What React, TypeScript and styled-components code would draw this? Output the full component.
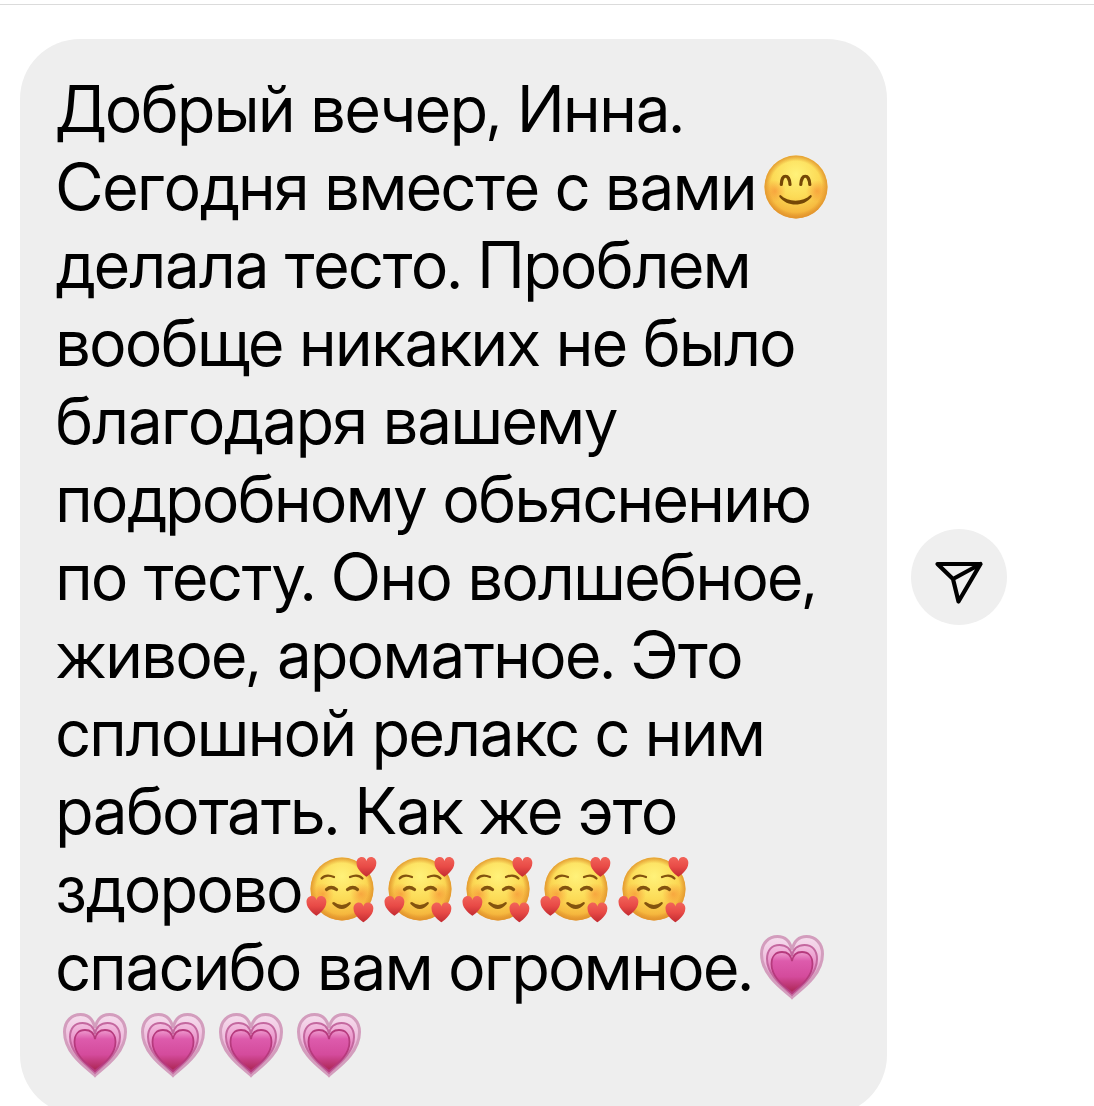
import React from "react";
import styled, { createGlobalStyle } from "styled-components";

const GlobalStyle = createGlobalStyle`
  body {
    margin: 0;
    background: #fff;
  }
`;

const Thread = styled.main`
  box-sizing: border-box;
  height: 100vh;
  padding-top: 4px;
  overflow: hidden;
  font-family: "Inter Display", Inter, "Liberation Sans", sans-serif;
`;

const Conversation = styled.section`
  border-top: 1px solid #dbdbdb;
  padding: 34px 87px 0 20px;
`;

const MessageRow = styled.article`
  display: flex;
  align-items: center;
  gap: 24px;
`;

const Bubble = styled.p`
  box-sizing: border-box;
  flex: 1;
  min-width: 0;
  margin: 0;
  padding: 31px 36px;
  border-radius: 60px;
  background: #eee;
  color: #000;
  font-size: 65px;
  line-height: 78px;
`;

const Line = styled.span`
  display: block;
  white-space: nowrap;
`;

const Emoji = styled.svg`
  width: 64px;
  height: 64px;
  margin: 0 7px;
  vertical-align: -9px;
  overflow: visible;
`;

const ShareButton = styled.button`
  flex: none;
  width: 96px;
  height: 96px;
  padding: 0;
  border: 0;
  border-radius: 50%;
  background: #efefef;
  color: #000;
  cursor: pointer;
`;

const ShareIcon = styled.svg`
  display: block;
  width: 96px;
  height: 96px;
`;

const Defs = styled.svg`
  position: absolute;
  width: 0;
  height: 0;
`;

const HEART =
  "M32 64 C28 60 0 43 0 19 C0 7 8 0 17 0 C25 0 30 5 32 13 C34 5 39 0 47 0 C56 0 64 7 64 19 C64 43 36 60 32 64 Z";

function Gradients() {
  return (
    <Defs aria-hidden="true">
      <defs>
        <radialGradient id="skin" cx="0.5" cy="0.3" r="0.72">
          <stop offset="0" stopColor="#fff27a" />
          <stop offset="0.5" stopColor="#fcdb57" />
          <stop offset="0.82" stopColor="#f6b93f" />
          <stop offset="1" stopColor="#e5932c" />
        </radialGradient>
        <radialGradient id="rim" cx="0.5" cy="0.5" r="0.5">
          <stop offset="0.82" stopColor="#e0922c" stopOpacity="0" />
          <stop offset="1" stopColor="#e0922c" stopOpacity="0.85" />
        </radialGradient>
        <radialGradient id="blush">
          <stop offset="0" stopColor="#f57a2c" stopOpacity="0.5" />
          <stop offset="1" stopColor="#f57a2c" stopOpacity="0" />
        </radialGradient>
        <linearGradient id="red" x1="0" y1="0" x2="0" y2="1">
          <stop offset="0" stopColor="#f2645a" />
          <stop offset="0.5" stopColor="#e84a46" />
          <stop offset="1" stopColor="#c22a31" />
        </linearGradient>
        <linearGradient id="pinkOuter" x1="0" y1="0" x2="0" y2="1">
          <stop offset="0" stopColor="#f5deed" />
          <stop offset="0.5" stopColor="#eeb4da" />
          <stop offset="1" stopColor="#c76c94" />
        </linearGradient>
        <linearGradient id="pinkMiddle" x1="0" y1="0" x2="0" y2="1">
          <stop offset="0" stopColor="#f3bfe0" />
          <stop offset="0.5" stopColor="#e67fc0" />
          <stop offset="1" stopColor="#b83d70" />
        </linearGradient>
        <linearGradient id="pinkInner" x1="0" y1="0" x2="0" y2="1">
          <stop offset="0" stopColor="#ee9ccf" />
          <stop offset="0.22" stopColor="#dd5bac" />
          <stop offset="0.6" stopColor="#d44b9c" />
          <stop offset="1" stopColor="#aa2450" />
        </linearGradient>
      </defs>
    </Defs>
  );
}

function SmilingFace() {
  return (
    <Emoji viewBox="0 0 64 64" role="img" aria-label="😊">
      <circle cx="32" cy="32" r="31.5" fill="url(#skin)" />
      <circle cx="11" cy="36" r="11" fill="url(#blush)" />
      <circle cx="53" cy="36" r="11" fill="url(#blush)" />
      <circle cx="32" cy="32" r="31.5" fill="url(#rim)" />
      <g fill="none" stroke="#754706" strokeWidth="3.2" strokeLinecap="round">
        <path d="M17.3 29.5 C17.5 18.5 25.5 18.5 26 29.5" />
        <path d="M36.8 29.5 C37.3 18.5 45.3 18.5 45.8 29.5" />
      </g>
      <path
        d="M16.5 40 C24 47.5 39 47.5 46.5 40 C47.8 40 48 41 47.5 42 C40 52 23 52 15.5 42 C15 41 15.2 40 16.5 40 Z"
        fill="#754706"
      />
    </Emoji>
  );
}

function LovingFace() {
  return (
    <Emoji viewBox="0 0 64 64" role="img" aria-label="🥰">
      <circle cx="32" cy="32" r="31.5" fill="url(#skin)" />
      <circle cx="13" cy="37" r="11" fill="url(#blush)" />
      <circle cx="51" cy="37" r="11" fill="url(#blush)" />
      <circle cx="32" cy="32" r="31.5" fill="url(#rim)" />
      <g fill="none" stroke="#83530e" strokeLinecap="round">
        <path d="M11.5 21.5 Q16 16.5 24 20" strokeWidth="2.2" />
        <path d="M40 20 Q48 16.5 52.5 21.5" strokeWidth="2.2" />
        <path d="M16.5 32.5 Q21 28.5 26.5 32.5" strokeWidth="3.2" />
        <path d="M37.5 32.5 Q43 28.5 47.5 32.5" strokeWidth="3.2" />
      </g>
      <path
        d="M24 45 Q32 51 39.5 45 Q41.5 45 40.5 47 Q32 57 22.5 47 Q21.5 45 24 45 Z"
        fill="#83530e"
      />
      <path d={HEART} transform="translate(46.5 0) scale(0.31)" fill="url(#red)" />
      <path d={HEART} transform="translate(-3.5 39) scale(0.31)" fill="url(#red)" />
      <path d={HEART} transform="translate(43.5 45.5) scale(0.31)" fill="url(#red)" />
    </Emoji>
  );
}

function GrowingHeart() {
  return (
    <Emoji viewBox="0 0 64 64" role="img" aria-label="💗">
      <path
        d="M32 62.5 C27 57 1.5 42 1.5 19 C1.5 8 9 1.5 17.5 1.5 C25 1.5 30 6 32 15 C34 6 39 1.5 46.5 1.5 C55 1.5 62.5 8 62.5 19 C62.5 42 37 57 32 62.5 Z"
        fill="url(#pinkOuter)"
        stroke="#d39dbd"
        strokeWidth="3"
      />
      <path
        d="M32 60 C28 55 7 42 7 24 C7 15 12 10 19.5 10 C26 10 31 14 32 21 C33 14 38 10 44.5 10 C52 10 57 15 57 24 C57 42 36 55 32 60 Z"
        fill="url(#pinkMiddle)"
        stroke="#c4689f"
        strokeWidth="2"
      />
      <path
        d="M32 58 C28 54 11.5 44 11.5 29 C11.5 21 16 17 22 17 C28 17 31 20 32 26 C33 20 36 17 42 17 C48 17 52.5 21 52.5 29 C52.5 44 36 54 32 58 Z"
        fill="url(#pinkInner)"
        stroke="#b63a7d"
        strokeWidth="1.8"
      />
    </Emoji>
  );
}

export default function App() {
  return (
    <Thread>
      <GlobalStyle />
      <Gradients />
      <Conversation>
        <MessageRow>
          <Bubble>
            <Line>Добрый вечер, Инна.</Line>
            <Line>
              Сегодня вместе с вами
              <SmilingFace />
            </Line>
            <Line>делала тесто. Проблем</Line>
            <Line>вообще никаких не было</Line>
            <Line>благодаря вашему</Line>
            <Line>подробному обьяснению</Line>
            <Line>по тесту. Оно волшебное,</Line>
            <Line>живое, ароматное. Это</Line>
            <Line>сплошной релакс с ним</Line>
            <Line>работать. Как же это</Line>
            <Line>
              здорово
              {Array.from({ length: 5 }, (_, i) => (
                <LovingFace key={i} />
              ))}
            </Line>
            <Line>
              спасибо вам огромное.
              <GrowingHeart />
            </Line>
            <Line>
              {Array.from({ length: 4 }, (_, i) => (
                <GrowingHeart key={i} />
              ))}
            </Line>
          </Bubble>
          <ShareButton type="button" aria-label="Поделиться">
            <ShareIcon viewBox="0 0 96 96" aria-hidden="true">
              <path
                d="M26.5 35 H69.5 L47.5 72.5 L42 50 Z M69.5 35 L42 50"
                fill="none"
                stroke="currentColor"
                strokeWidth="4.2"
                strokeLinejoin="round"
                strokeLinecap="round"
              />
            </ShareIcon>
          </ShareButton>
        </MessageRow>
      </Conversation>
    </Thread>
  );
}
